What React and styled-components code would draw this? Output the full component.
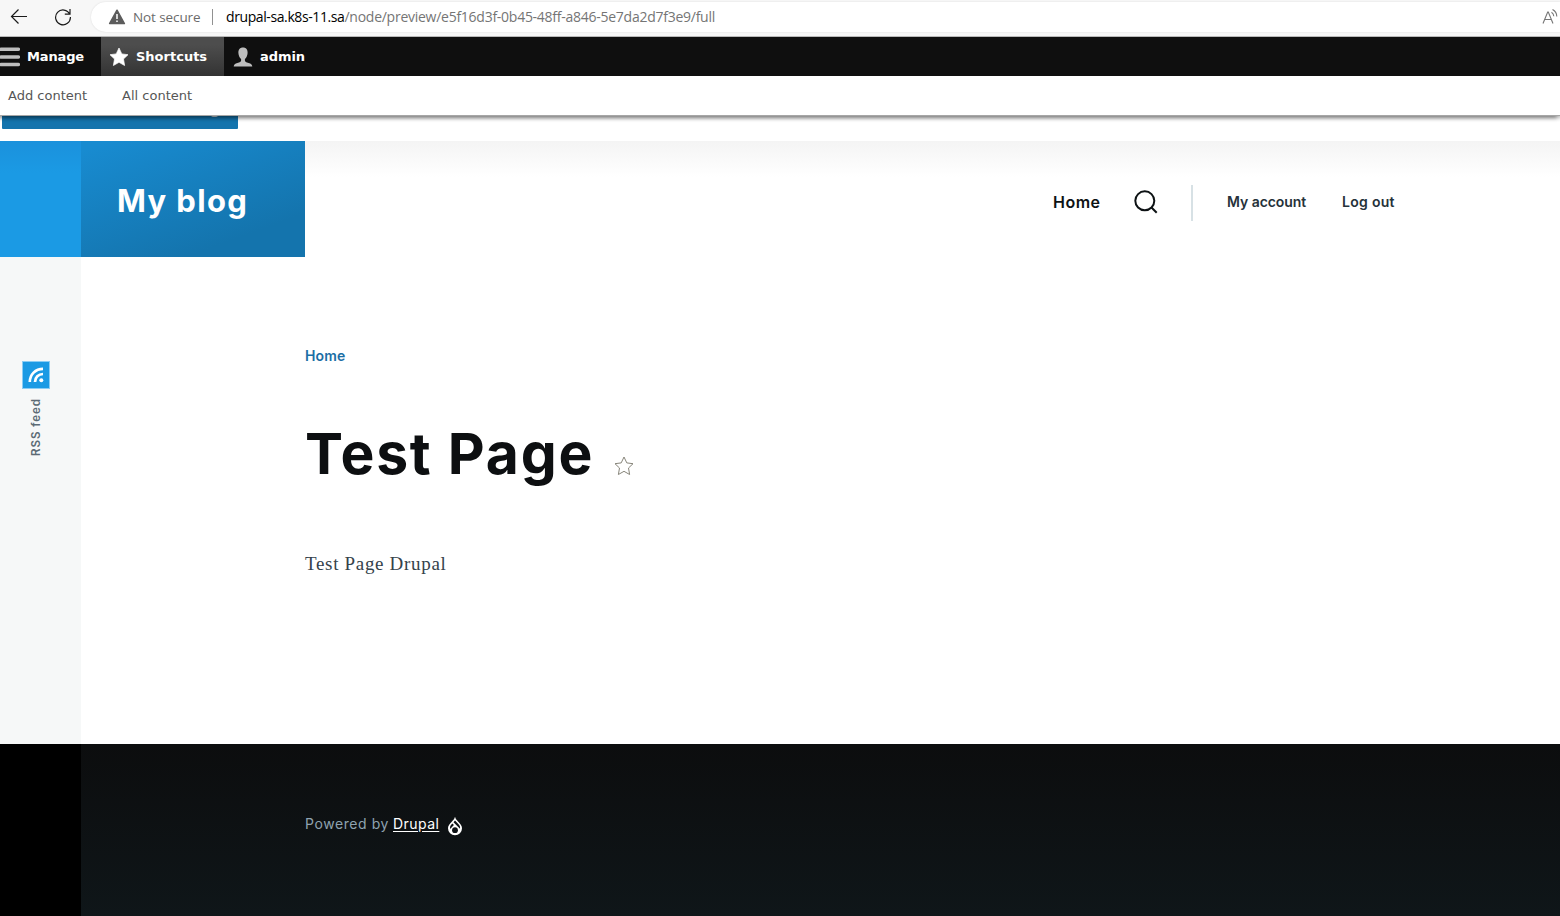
import React from "react";
import styled, { createGlobalStyle } from "styled-components";

const Global = createGlobalStyle`
  * { box-sizing: border-box; }
  body { margin: 0; background: #fff; overflow: hidden; }
`;

const sans = `Inter, "Open Sans", sans-serif`;
const verdana = `"DejaVu Sans", sans-serif`;

const Page = styled.div`
  width: 1560px;
  height: 916px;
  display: flex;
  flex-direction: column;
  overflow: hidden;
  background: #fff;
  font-family: ${sans};
`;

/* Browser bar */
const BrowserBar = styled.div`
  flex: none;
  height: 37px;
  display: flex;
  align-items: flex-start;
  background: #f7f7f7;
  border-bottom: 1px solid #b9b9b9;
`;
const NavIcons = styled.div`
  width: 91px;
  height: 34px;
  flex: none;
  display: flex;
  align-items: center;
  gap: 26px;
  padding-left: 10px;
`;
const AddressBar = styled.div`
  flex: 1;
  height: 30px;
  margin-top: 2px;
  padding-left: 17px;
  display: flex;
  align-items: center;
  background: #fff;
  border-radius: 15px 0 0 15px;
  box-shadow: 0 0 2px rgba(0, 0, 0, 0.12);
  font: 14px/20px "Open Sans", sans-serif;
  white-space: pre;
`;
const Security = styled.span`
  width: 79px;
  margin-left: 7px;
  color: #6b6b6b;
  font-size: 13.5px;
  letter-spacing: -0.1px;
`;
const Divider = styled.span`
  width: 1px;
  height: 16px;
  margin-right: 13px;
  background: #919191;
`;
const Host = styled.span`
  color: #000;
  letter-spacing: -0.4px;
`;
const Path = styled.span`
  flex: 1;
  color: #757575;
  letter-spacing: -0.26px;
`;

/* Admin toolbar */
const Toolbar = styled.nav`
  flex: none;
  height: 39px;
  display: flex;
  background: #0f0f0f;
`;
const ToolbarTab = styled.a`
  width: ${(p) => p.$width}px;
  padding-left: ${(p) => p.$inset}px;
  display: flex;
  align-items: center;
  gap: ${(p) => p.$gap}px;
  color: #fff;
  background: ${(p) => (p.$active ? "linear-gradient(#4d4d4d 20%, #333)" : "transparent")};
  font: bold 13px/20px ${verdana};
  letter-spacing: ${(p) => p.$spacing}px;
`;
const Tray = styled.nav`
  flex: none;
  position: relative;
  z-index: 2;
  height: 39px;
  padding-left: 8px;
  display: flex;
  align-items: center;
  gap: 35px;
  background: #fff;
  box-shadow: 0 1px 0 #a6a6a6, -4px 2px 4px 1px rgba(0, 0, 0, 0.4), 4px 2px 4px 1px rgba(0, 0, 0, 0.2);
  clip-path: inset(0 0 -10px 0);
`;
const TrayLink = styled.a`
  color: #565656;
  font: 13px/20px ${verdana};
`;

/* Preview strip */
const PreviewStrip = styled.div`
  flex: none;
  height: 26px;
  padding-left: 2px;
  display: flex;
  align-items: flex-start;
`;
const BackButton = styled.div`
  width: 236px;
  height: 14px;
  display: flex;
  align-items: flex-end;
  padding: 0 20px 12px;
  justify-content: flex-end;
  background: #1474ad;
  border-radius: 0 0 1px 1px;
`;
const DescenderTip = styled.span`
  width: 7px;
  height: 2px;
  border-radius: 0 0 3px 3px;
  background: #d2e0e9;
`;

/* Site */
const Site = styled.div`
  flex: none;
  height: 603px;
  display: flex;
`;
const Rail = styled.aside`
  width: 81px;
  flex: none;
  background: #f6f8f8;
`;
const RailAccent = styled.div`
  height: 116px;
  background: linear-gradient(#1b91dc, #1b9ae4 32px);
`;
const Feed = styled.a`
  width: 72px;
  margin-top: 104px;
  display: flex;
  flex-direction: column;
  align-items: center;
  gap: 9px;
`;
const FeedLabel = styled.span`
  writing-mode: vertical-rl;
  transform: rotate(180deg);
  color: #5c6b75;
  font: 600 11.5px/15px ${sans};
  letter-spacing: 0.95px;
`;
const Main = styled.div`
  flex: 1;
  display: flex;
  flex-direction: column;
`;
const Header = styled.header`
  height: 116px;
  display: flex;
  align-items: stretch;
  background: linear-gradient(#f4f4f4, #fff 36px);
`;
const Brand = styled.a`
  width: 224px;
  padding: 4px 0 0 36px;
  display: flex;
  align-items: center;
  background: linear-gradient(160deg, #188bd0 5%, #1474ad 78%);
  color: #fff;
  font: 700 31px/40px ${sans};
  letter-spacing: 1.35px;
`;
const Nav = styled.nav`
  flex: 1;
  margin-left: 748px;
  display: flex;
  align-items: center;
  padding-top: 7px;
`;
const NavLink = styled.a`
  width: ${(p) => p.$width}px;
  padding-bottom: 1px;
  color: ${(p) => (p.$primary ? "#0d1214" : "#26323a")};
  font: 600 ${(p) => (p.$primary ? 16 : 14)}px/20px ${sans};
  letter-spacing: ${(p) => p.$spacing}px;
  white-space: nowrap;
`;
const NavDivider = styled.span`
  width: 2px;
  height: 36px;
  margin: 0 34px 0 32px;
  background: #d7e1e5;
`;
const Content = styled.main`
  padding: 89px 0 0 224px;
`;
const Breadcrumb = styled.a`
  display: block;
  color: #1b6ea5;
  font: 600 14px/20px ${sans};
  letter-spacing: 0.15px;
`;
const TitleRow = styled.div`
  margin-top: 52px;
  height: 72px;
  display: flex;
  align-items: center;
`;
const Title = styled.h1`
  width: 309px;
  margin: 0;
  color: #0d0f11;
  font: 700 57px/72px ${sans};
  letter-spacing: 1.8px;
  white-space: nowrap;
`;
const TitleStar = styled.span`
  display: flex;
  padding-top: 24px;
`;
const Body = styled.p`
  margin: 60px 0 0;
  color: #35424b;
  font: 19px/28px "Liberation Serif", serif;
  letter-spacing: 0.68px;
`;

const Footer = styled.footer`
  flex: none;
  height: 172px;
  display: flex;
  background: #000;
`;
const FooterBody = styled.div`
  flex: 1;
  margin-left: 81px;
  padding: 70px 0 0 224px;
  display: flex;
  align-items: flex-start;
  background: linear-gradient(#0c0d0e, #0f1619);
  color: #8fa3b0;
  font: 400 14px/20px ${sans};
`;
const Powered = styled.span`
  width: 88px;
  letter-spacing: 0.58px;
`;
const DrupalLink = styled.a`
  width: 54px;
  color: #fff;
  letter-spacing: 0.45px;
  text-decoration: underline;
  text-underline-offset: 2px;
`;
const DropWrap = styled.span`
  padding-top: 2px;
  display: flex;
`;

const STAR = "M10 1 L12.8 6.9 L19 7.7 L14.5 12 L15.6 18.500 L10 15.300 L4.400 18.500 L5.500 12 L1 7.700 L7.200 6.900 Z";

const BackIcon = () => (
  <svg width="18" height="18" viewBox="0 0 18 18" fill="none" stroke="#1b1b1b" strokeWidth="1.2">
    <path d="M17 8.5H1.5M8.5 1.5l-7 7 7 7" />
  </svg>
);
const ReloadIcon = () => (
  <svg width="18" height="18" viewBox="0 0 18 18" fill="none" stroke="#1b1b1b" strokeWidth="1.2">
    <path d="M15.700 6.200A7.400 7.400 0 1 0 16.400 9M16 1v5.200h-5.200" />
  </svg>
);
const WarningIcon = () => (
  <svg width="18" height="16" viewBox="0 0 18 16">
    <path d="M9 1.2 16.4 14.6H1.6Z" fill="#5c5c5c" stroke="#5c5c5c" strokeWidth="1.5" strokeLinejoin="round" />
    <path d="M9 5v5M9 11.4v1.7" stroke="#fff" strokeWidth="1.5" />
  </svg>
);
const ReadAloudIcon = () => (
  <svg width="18" height="18" viewBox="0 0 18 18" fill="none" stroke="#767676" strokeWidth="1.1">
    <path d="M1 15.5 5.7 4h.6L11 15.5M2.8 11.5h6.4M9.5 4.3a5 5 0 0 1 2.3 4M10.5 1.5a8 8 0 0 1 4.3 7" />
  </svg>
);
const MenuIcon = () => (
  <svg width="20" height="20" viewBox="0 0 20 20" fill="none" stroke="#bebebe" strokeWidth="3.6" strokeLinecap="round">
    <path d="M1 2.3h17.3M1 10h17.3M1 17.5h17.3" />
  </svg>
);
const ShortcutsIcon = () => (
  <svg width="20" height="20" viewBox="0 0 20 20"><path d={STAR} fill="#fff" stroke="#fff" strokeWidth=".7" strokeLinejoin="round" /></svg>
);
const UserIcon = () => (
  <svg width="20" height="20" viewBox="0 0 20 20">
    <path fill="#bebebe" d="M10 .5C6.900.5 5.200 2.700 5.400 6c.1 2.600 1.200 4.700 2.700 6v1.600c0 1.200-1.300 1.900-3.700 2.400C2 16.500.9 17.500.7 19.500h18.600c-.2-2-1.300-3-3.700-3.500-2.400-.5-3.700-1.200-3.700-2.400V12c1.500-1.300 2.600-3.400 2.700-6C14.800 2.700 13.100.5 10 .5Z" />
  </svg>
);
const SearchIcon = () => (
  <svg width="25" height="26" viewBox="0 0 25 26" fill="none" stroke="#0d1214" strokeWidth="2">
    <circle cx="10.800" cy="10.800" r="9.500" /><path d="m17.500 17.500 5.200 5.200" />
  </svg>
);
const FeedIcon = () => (
  <svg width="28" height="28" viewBox="0 0 28 28" fill="none">
    <rect x=".5" y=".5" width="27" height="27" fill="#1b9ae4" stroke="#8bcdf4" />
    <path d="M7.800 21C7.800 13.500 13.500 7.800 21 7.800M13 21c0-4.500 3.500-8 8-8" stroke="#fff" strokeWidth="2.700" />
    <circle cx="19.300" cy="19.300" r="2" fill="#fff" />
  </svg>
);
const AddShortcutIcon = () => (
  <svg width="20" height="20" viewBox="0 0 20 20"><path d={STAR} fill="#fff" stroke="#87857a" strokeWidth="1" strokeLinejoin="round" /></svg>
);
const DropIcon = () => (
  <svg width="16" height="20" viewBox="0 0 16 20">
    <path fill="#fff" d="M8 .8C8.700 3.300 10 4.400 11.500 5.900c1.900 2 3.500 3.700 3.500 6.300a7 7 0 0 1-14 0c0-2.600 1.600-4.300 3.500-6.300C6 4.400 7.300 3.300 8 .8Z" />
    <path fill="#0e1215" d="M8 4.600 12 8.700c1 1.200 1.300 2.600 1 4.100L6.500 6.200ZM5.400 7.600 6.900 9.100 3.200 13c-.5-2 .1-3.200 1-4.200Z" />
    <circle cx="8" cy="14.200" r="2.900" fill="#0e1215" />
  </svg>
);

export default function App() {
  return (
    <Page>
      <Global />
      <BrowserBar>
        <NavIcons><BackIcon /><ReloadIcon /></NavIcons>
        <AddressBar>
          <WarningIcon />
          <Security>Not secure</Security>
          <Divider />
          <Host>drupal-sa.k8s-11.sa</Host>
          <Path>/node/preview/e5f16d3f-0b45-48ff-a846-5e7da2d7f3e9/full</Path>
          <ReadAloudIcon />
        </AddressBar>
      </BrowserBar>
      <Toolbar>
        <ToolbarTab $width={101} $inset={0} $gap={7} $spacing={-0.15}><MenuIcon />Manage</ToolbarTab>
        <ToolbarTab $width={123} $inset={8} $gap={7} $spacing={0} $active><ShortcutsIcon />Shortcuts</ToolbarTab>
        <ToolbarTab $width={100} $inset={9} $gap={7} $spacing={-0.08}><UserIcon />admin</ToolbarTab>
      </Toolbar>
      <Tray>
        <TrayLink>Add content</TrayLink>
        <TrayLink>All content</TrayLink>
      </Tray>
      <PreviewStrip><BackButton><DescenderTip /></BackButton></PreviewStrip>
      <Site>
        <Rail>
          <RailAccent />
          <Feed><FeedIcon /><FeedLabel>RSS feed</FeedLabel></Feed>
        </Rail>
        <Main>
          <Header>
            <Brand>My blog</Brand>
            <Nav>
              <NavLink $primary $width={81} $spacing={0.5}>Home</NavLink>
              <SearchIcon />
              <NavDivider />
              <NavLink $width={115} $spacing={-0.05}>My account</NavLink>
              <NavLink $width={60} $spacing={0.3}>Log out</NavLink>
            </Nav>
          </Header>
          <Content>
            <Breadcrumb>Home</Breadcrumb>
            <TitleRow>
              <Title>Test Page</Title>
              <TitleStar><AddShortcutIcon /></TitleStar>
            </TitleRow>
            <Body>Test Page Drupal</Body>
          </Content>
        </Main>
      </Site>
      <Footer>
        <FooterBody>
          <Powered>Powered by</Powered>
          <DrupalLink>Drupal</DrupalLink>
          <DropWrap><DropIcon /></DropWrap>
        </FooterBody>
      </Footer>
    </Page>
  );
}
